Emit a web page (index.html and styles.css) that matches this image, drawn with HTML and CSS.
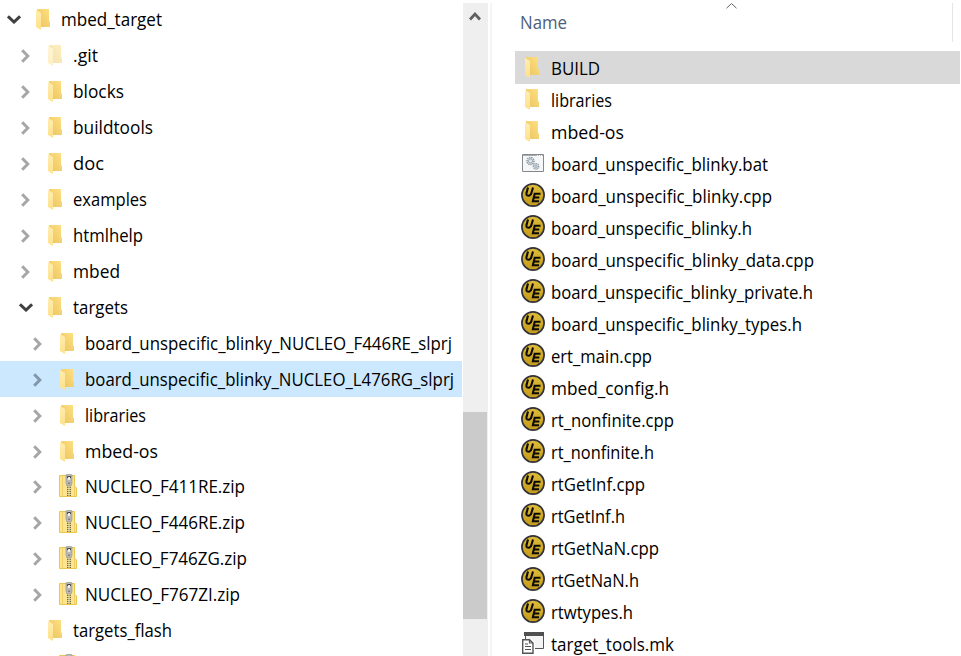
FILE: index.html
```html
<!DOCTYPE html>
<html lang="en">
<head>
<meta charset="utf-8">
<title>File Explorer</title>
<link rel="stylesheet" href="styles.css">
</head>
<body>
<svg class="defs" width="0" height="0">
  <defs>
    <linearGradient id="gold" x1="0" y1="1" x2="1" y2="0"><stop offset="0" stop-color="#eac45f"/><stop offset="1" stop-color="#ffe083"/></linearGradient>
    <linearGradient id="flap" x1="0" y1="0" x2="0" y2="1"><stop offset="0" stop-color="#ffedb0"/><stop offset="1" stop-color="#ffe08a"/></linearGradient>
    <linearGradient id="coin" x1="0" y1="0" x2="0" y2="1"><stop offset="0" stop-color="#e0bd38"/><stop offset="1" stop-color="#c19a18"/></linearGradient>
    <symbol id="folder" viewBox="0 0 14 21"><path d="M1 0H13V12L14 13V18H1Z" fill="url(#gold)"/><path d="M0 1L5 4V21L0 18Z" fill="url(#flap)"/></symbol>
    <symbol id="zip" viewBox="0 0 18 23"><path d="M.5 1.500H15.500V12L17.500 14V22.500H.5Z" fill="#ffe48f" stroke="#e9c64e"/><path d="M3.500 2V22M15.500 12V22" stroke="#f2d068"/><path d="M10 11V22" stroke="#796e4c" stroke-width="4" stroke-dasharray="1.300 .7"/><path d="M10 11V22" stroke="#fff0ae" stroke-width="1"/><path d="M7 .8Q10-.2 13 .8V9L12 12H8L7 9Z" fill="#b9b9b9" stroke="#8b8b8b" stroke-width=".6"/><path d="M9 2.500H11V6H9Z" fill="#eee"/><path d="M8.500 4V2.500H11.500V4M10 8.500V10" stroke="#444" fill="none"/></symbol>
    <symbol id="right" viewBox="0 0 9 14"><path d="M1.200 1.200L6.800 7L1.200 12.800" fill="none" stroke="currentColor" stroke-width="3"/></symbol>
    <symbol id="down" viewBox="0 0 14 9"><path d="M1 1.300L7 7L13 1.300" fill="none" stroke="#404040" stroke-width="3"/></symbol>
    <symbol id="ue" viewBox="0 0 24 24"><circle cx="12" cy="12" r="11.100" fill="url(#coin)" stroke="#34333c" stroke-width="1.700"/><g fill="none" stroke="#0d0b08" stroke-width="2.100"><path d="M7 4.500L5.500 10Q5 12.700 7.300 12.700Q9.700 12.700 10.400 10L12 4.500"/><path d="M19.500 10.700H13.700L11.900 18.300H18M12.800 14.500H18.300"/></g></symbol>
    <symbol id="bat" viewBox="0 0 22 18"><path d="M.5.5H21.500V17.500H.5Z" fill="#f5f6f8" stroke="#85888c"/><path d="M1 1.500H21" stroke="#a9adb2"/><path d="M15 1.500H20" stroke="#fff" stroke-dasharray="1 1"/><g fill="#e2eaf0" stroke="#8b979f"><circle cx="8.500" cy="7" r="3.500" stroke-width="1.500" stroke-dasharray="1.300 .8"/><circle cx="8.500" cy="7" r="2" stroke-width=".8"/><circle cx="14" cy="12.300" r="2.700" stroke-width="1.400" stroke-dasharray="1.100 .7"/><circle cx="14" cy="12.300" r="1.200" stroke-width=".8"/></g></symbol>
    <symbol id="mk" viewBox="0 0 22 22"><path d="M3.500 7V.5H21.500V16.500H13" fill="#f4f4f4" stroke="#555"/><path d="M2 0H22V4H2Z" fill="#505050"/><path d="M0 7H9L13 10V22H0Z" fill="#fff"/><path d="M.7 7.700H7.500L11 11V21.300H.7Z" fill="#fff" stroke="#555" stroke-width="1.400"/><path d="M7.500 8V11H11M3 12H6M3 14.500H9M3 17.500H9" fill="none" stroke="#555" stroke-width="1.200"/></symbol>
  </defs>
</svg>
<div class="explorer">
  <nav class="tree" id="tree"></nav>
  <div class="scrollbar"><svg class="up" viewBox="0 0 12 10"><path d="M1 8.500L6 3L11 8.500" fill="none" stroke="#606060" stroke-width="2.800"/></svg><div class="thumb"></div></div>
  <div class="divider"></div>
  <main class="files">
    <header class="head"><span class="name"><span class="label" data-width="47">Name</span></span><svg class="sort" viewBox="0 0 11 6"><path d="M.5 5.200L5.500.6L10.500 5.200" fill="none" stroke="#666"/></svg></header>
    <div id="files"></div>
  </main>
</div>
<script src="app.js"></script>
</body>
</html>
```
FILE: styles.css
```css
* { box-sizing: border-box; }
body { margin: 0; background: #fff; color: #000; font: 18px/30px "Open Sans", "Noto Sans", sans-serif; overflow: hidden; }
svg { display: block; flex: none; }
.defs { position: absolute; }
.explorer { display: flex; width: 961px; height: 656px; overflow: hidden; }
.tree { width: 463px; padding-top: 1px; flex: none; }
.node { display: flex; align-items: flex-start; height: 36px; width: 462px; padding-left: 22px; color: #a6a6a6; }
.node.root { padding-left: 10px; }
.node.deep { padding-left: 34px; }
.node.short { height: 35px; }
.node.selected { background: #cce8ff; color: #8298aa; }
.twist { width: 26px; height: 30px; flex: none; }
.twist .right { width: 9px; height: 14px; margin-top: 12px; margin-left: -1px; }
.twist .down { width: 14px; height: 9px; margin: 14px 0 0 -3px; }
.glyph { width: 25px; flex: none; }
.folder { width: 14px; height: 21px; margin-top: 8px; }
.hidden .folder { opacity: .5; }
.zip { width: 18px; height: 23px; margin: 6px 0 0 -1px; }
.label { display: inline-block; color: #000; white-space: nowrap; transform-origin: 0 50%; }
.node .label { margin-top: 3px; }
.scrollbar { width: 25px; margin-top: 3px; background: #efefef; flex: none; }
.up { width: 12px; height: 10px; margin: 8px 0 0 6px; }
.thumb { width: 24px; height: 207px; margin-top: 391px; background: #cbcbcb; }
.divider { width: 2px; margin: 3px 0 0 2px; background: #f5f5f5; flex: none; }
.files { width: 445px; margin-left: 23px; flex: none; }
.head { display: flex; width: 438px; height: 39px; margin: 3px 0 9px; padding-left: 5px; border-right: 1px solid #e5e5e5; }
.name { width: 206px; padding-top: 4px; }
.name .label { color: #4c607a; }
.sort { width: 11px; height: 6px; }
.file { display: flex; height: 32px; padding-left: 6px; }
.file.selected { height: 33px; padding-top: 1px; background: #d9d9d9; }
.file .glyph { width: 30px; }
.file .label { margin-top: 1px; }
.file .folder { margin: 5px 0 0 4px; }
.ue { width: 24px; height: 24px; margin-top: 3px; }
.bat { width: 22px; height: 18px; margin: 6px 0 0 1px; }
.mk { width: 22px; height: 22px; margin: 4px 0 0 1px; }
```
FILE: app.js
```js
// Columns: label, icon, row classes, disclosure arrow, label width.
const nodes = [
  ["mbed_target", "folder", "root", "down", 101],
  [".git", "folder", "hidden", "right", 25],
  ["blocks", "folder", "", "right", 51],
  ["buildtools", "folder", "", "right", 80],
  ["doc", "folder", "", "right", 31],
  ["examples", "folder", "", "right", 74],
  ["htmlhelp", "folder", "", "right", 70],
  ["mbed", "folder", "", "right", 47],
  ["targets", "folder", "", "down", 55],
  ["board_unspecific_blinky_NUCLEO_F446RE_slprj", "folder", "deep", "right", 367],
  ["board_unspecific_blinky_NUCLEO_L476RG_slprj", "folder", "deep selected", "right", 369],
  ["libraries", "folder", "deep", "right", 61],
  ["mbed-os", "folder", "deep short", "right", 73],
  ["NUCLEO_F411RE.zip", "zip", "deep", "right", 160],
  ["NUCLEO_F446RE.zip", "zip", "deep", "right", 160],
  ["NUCLEO_F746ZG.zip", "zip", "deep", "right", 162],
  ["NUCLEO_F767ZI.zip", "zip", "deep", "right", 155],
  ["targets_flash", "folder", "", "", 99],
  ["", "zip", "deep", "", 0]
];
const files = [
  ["BUILD", "folder", "selected", 49],
  ["libraries", "folder", "", 61],
  ["mbed-os", "folder", "", 73],
  ["board_unspecific_blinky.bat", "bat", "", 217],
  ["board_unspecific_blinky.cpp", "ue", "", 221],
  ["board_unspecific_blinky.h", "ue", "", 201],
  ["board_unspecific_blinky_data.cpp", "ue", "", 263],
  ["board_unspecific_blinky_private.h", "ue", "", 262],
  ["board_unspecific_blinky_types.h", "ue", "", 251],
  ["ert_main.cpp", "ue", "", 101],
  ["mbed_config.h", "ue", "", 118],
  ["rt_nonfinite.cpp", "ue", "", 123],
  ["rt_nonfinite.h", "ue", "", 103],
  ["rtGetInf.cpp", "ue", "", 94],
  ["rtGetInf.h", "ue", "", 74],
  ["rtGetNaN.cpp", "ue", "", 108],
  ["rtGetNaN.h", "ue", "", 88],
  ["rtwtypes.h", "ue", "", 82],
  ["target_tools.mk", "mk", "", 123]
];
const icon = n => n ? `<svg class="${n}"><use href="#${n}"/></svg>` : "";
const label = (t, w) => `<span class="label" data-width="${w}">${t}</span>`;
document.getElementById("tree").innerHTML = nodes.map(([t, i, c, a, w]) =>
  `<div class="node ${c}"><span class="twist">${icon(a)}</span><span class="glyph">${icon(i)}</span>${label(t, w)}</div>`).join("");
document.getElementById("files").innerHTML = files.map(([t, i, c, w]) =>
  `<div class="file ${c}"><span class="glyph">${icon(i)}</span>${label(t, w)}</div>`).join("");
document.querySelectorAll(".label").forEach(el => {
  const natural = el.getBoundingClientRect().width;
  if (natural) el.style.transform = `scaleX(${el.dataset.width / natural})`;
});
```
